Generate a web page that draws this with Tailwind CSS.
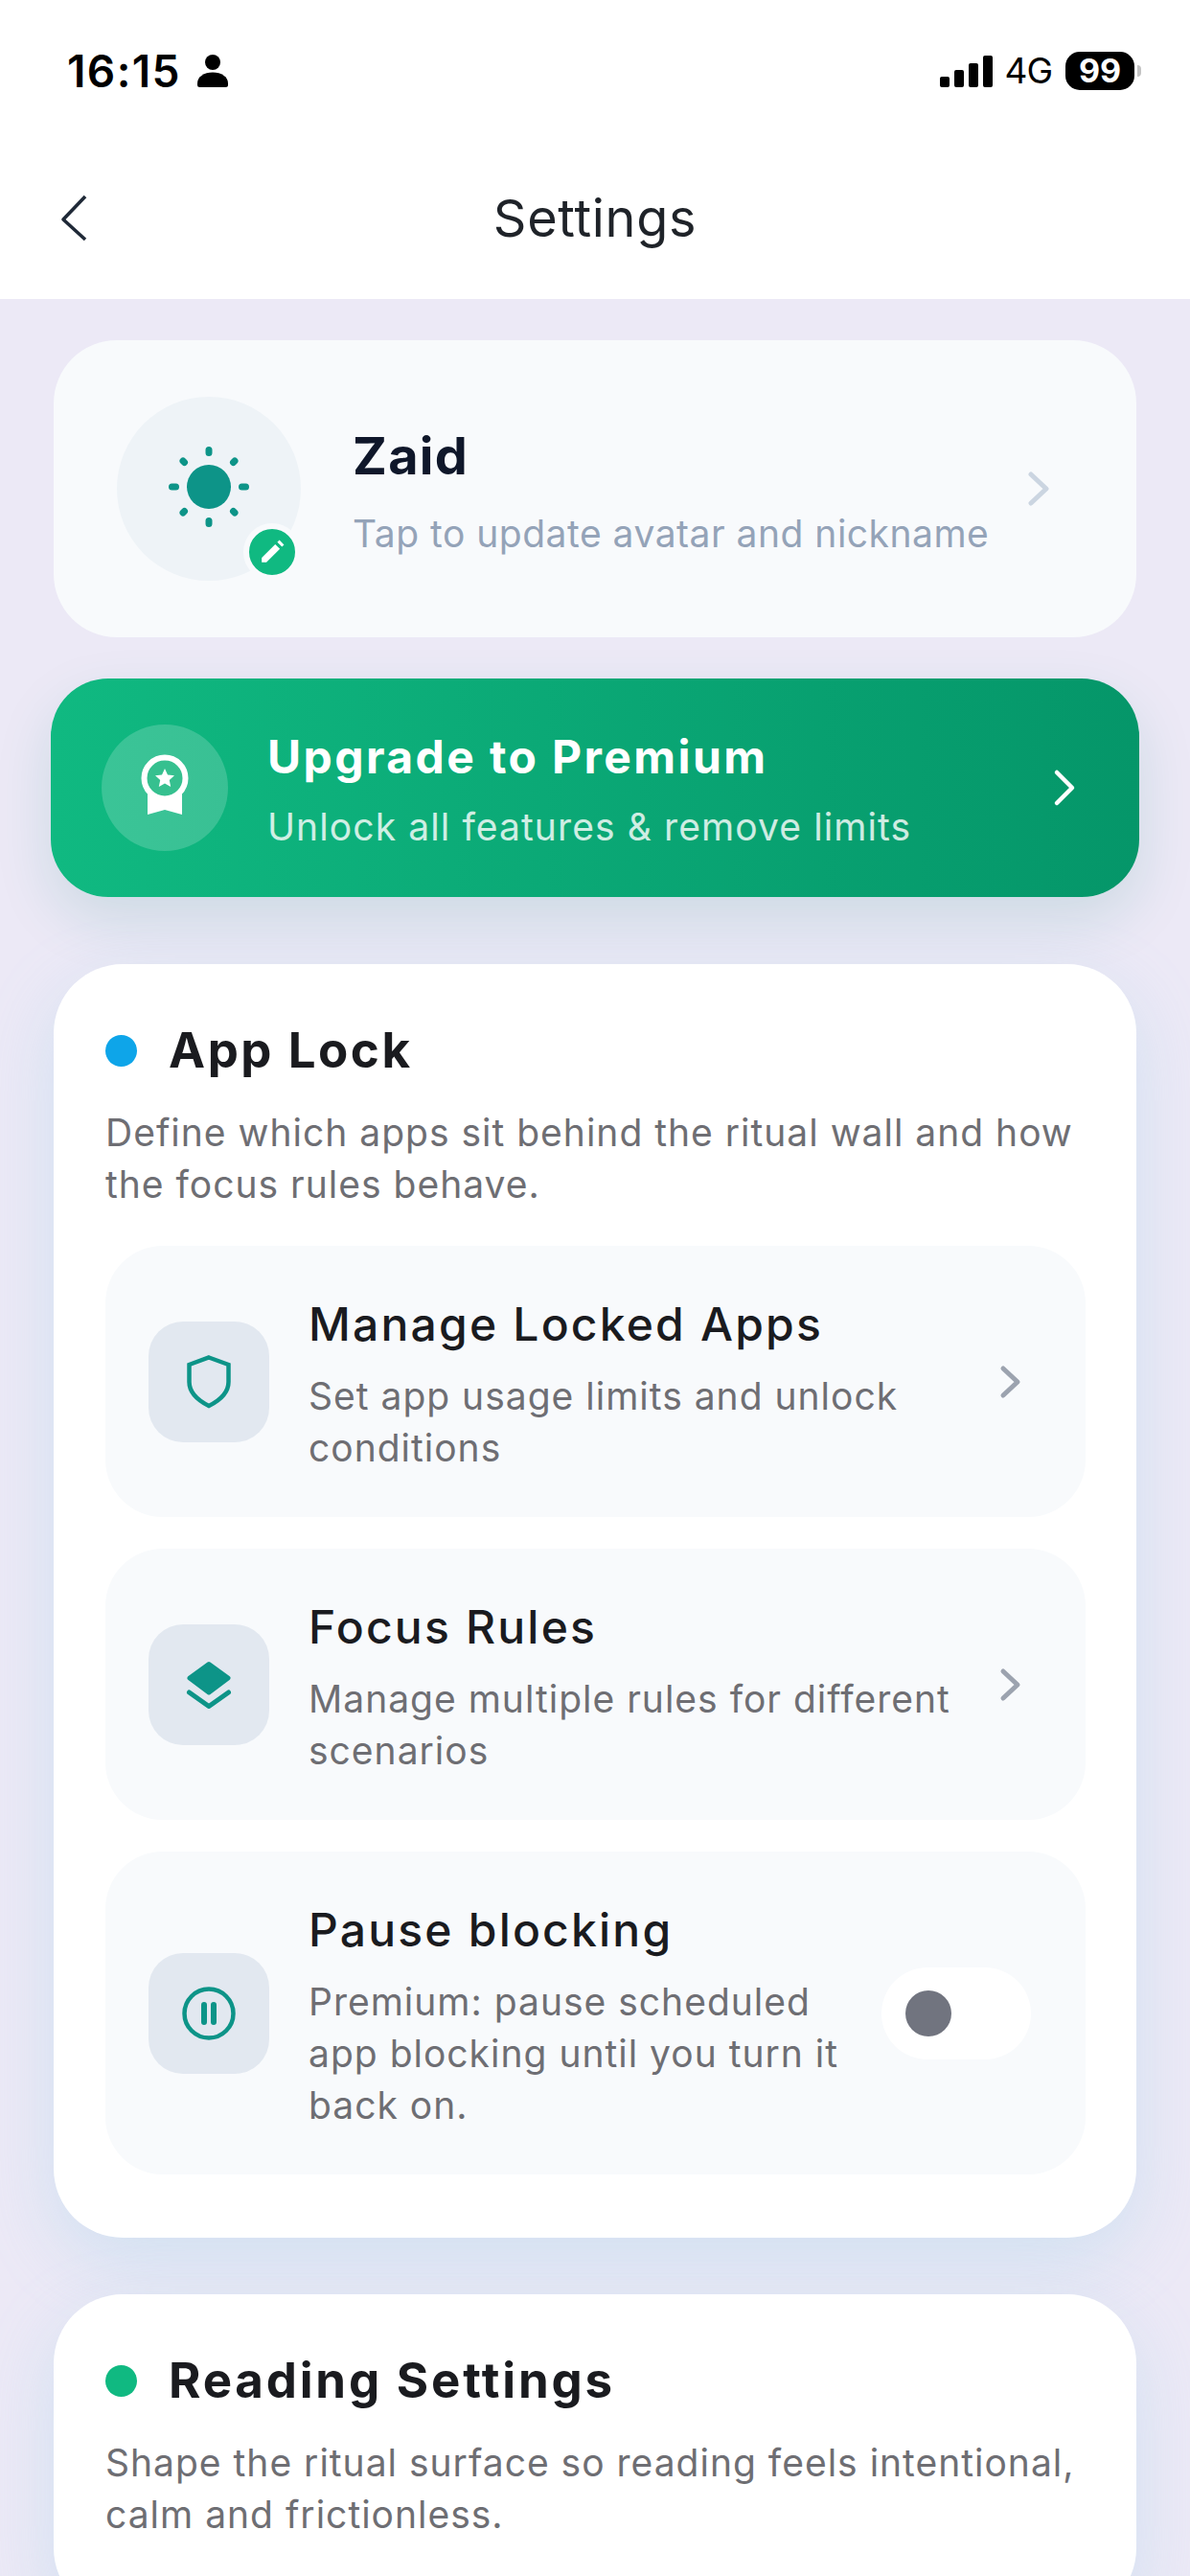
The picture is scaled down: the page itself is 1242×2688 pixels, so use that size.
<!DOCTYPE html>
<html lang="en">
<head>
  <meta charset="UTF-8">
  <meta name="viewport" content="width=device-width, initial-scale=1.0">
  <title>Settings</title>
  <script src="https://cdn.jsdelivr.net/npm/@tailwindcss/browser@4"></script>
</head>
<body class="w-[1242px] h-[2688px] overflow-hidden bg-[#ece9f6] font-['Inter',sans-serif]">
  <!-- status bar + nav -->
  <header class="bg-white h-[312px] relative z-10">
    <div class="h-[150px] flex items-start justify-between pl-[70px] pr-[51px] pt-[50px]">
      <div class="flex items-center gap-[17px] h-[48px]">
        <span class="text-[46px] leading-[48px] font-semibold text-black tracking-[1.4px]">16:15</span>
        <svg class="w-[32px] h-[34px]" viewBox="0 0 32 34" fill="#000"><circle cx="16" cy="8" r="8"/><path d="M0 30C0 23 7 18.500 16 18.500S32 23 32 30v1.500a2.500 2.500 0 0 1-2.500 2.500h-27A2.500 2.500 0 0 1 0 31.500z"/></svg>
      </div>
      <div class="flex items-center h-[48px]">
        <svg class="w-[55px] h-[33px]" viewBox="0 0 55 33" fill="#000"><rect x="0" y="22" width="10" height="11" rx="2"/><rect x="15" y="15" width="10" height="18" rx="2"/><rect x="30" y="8" width="10" height="25" rx="2"/><rect x="45" y="0" width="10" height="33" rx="2"/></svg>
        <span class="ml-[12px] text-[37px] leading-[48px] text-black tracking-[-1px]">4G</span>
        <span class="ml-[14px] w-[72px] h-[40px] rounded-[15px] bg-black text-white text-[34px] leading-[40px] font-bold text-center">99</span>
        <span class="ml-[3px] w-[4px] h-[12px] rounded-r-full bg-[#c4c4c4]"></span>
      </div>
    </div>
    <div class="h-[162px] relative flex items-start justify-center">
      <svg class="absolute left-[63px] top-[52px] w-[28px] h-[50px]" viewBox="0 0 28 50" fill="none" stroke="#1f2937" stroke-width="3.6"><path d="M26 3 3 27l23 21" stroke-linejoin="round"/></svg>
      <h1 class="mt-[48px] text-[54px] leading-[60px] text-[#1f2329] tracking-[0.7px]">Settings</h1>
    </div>
  </header>

  <main class="px-[56px] pt-[43px]">
    <!-- profile -->
    <section class="h-[310px] rounded-[66px] bg-[#f8fafc] flex items-center pl-[66px] pr-[90px]">
      <div class="relative w-[192px] h-[192px] rounded-full bg-[#eef3f7] flex items-center justify-center shrink-0">
        <svg class="w-[90px] h-[90px] -mt-[4px]" viewBox="0 0 90 90" fill="none" stroke="#0d9488" stroke-width="7" stroke-linecap="round">
          <circle cx="45" cy="45" r="23" fill="#0d9488" stroke="none"/>
          <path d="M45 6.500v3M45 80.500v3M6.500 45h4M79.500 45h4M18 18l1.500 1.500M70.500 70.500l1.500 1.500M72 18l-1.500 1.500M18 72l1.500-1.500"/>
        </svg>
        <div class="absolute left-[132px] top-[132px] w-[60px] h-[60px] rounded-full bg-[#10b981] border-[6px] border-[#f8fafc] flex items-center justify-center">
          <svg class="w-[26px] h-[26px]" viewBox="0 0 24 24" fill="#fff"><path d="M2 22v-4.500L15 4.500 19.500 9 6.500 22zM17 2.500l2-2 4.500 4.500-2 2z"/></svg>
        </div>
      </div>
      <div class="ml-[54px] flex-1 pt-[7px]">
        <h2 class="text-[54px] leading-[66px] font-bold text-[#0f172a] tracking-[1.3px]">Zaid</h2>
        <p class="mt-[21px] text-[39px] leading-[54px] text-[#94a3b8] tracking-[0.5px] whitespace-nowrap">Tap to update avatar and nickname</p>
      </div>
      <svg class="w-[24px] h-[38px] shrink-0 -ml-[10px]" viewBox="0 0 24 38" fill="none" stroke="#cbd5e1" stroke-width="5" stroke-linecap="round" stroke-linejoin="round"><path d="M4 4l16 15L4 34"/></svg>
    </section>

    <!-- premium banner -->
    <section class="-mx-[3px] mt-[43px] h-[228px] rounded-[60px] bg-gradient-to-r from-[#10b981] to-[#059669] flex items-center pl-[53px] pr-[64px] shadow-[0_24px_60px_rgba(16,130,120,0.14)]">
      <div class="w-[132px] h-[132px] rounded-full bg-white/[0.18] flex items-center justify-center shrink-0">
        <svg class="w-[50px] h-[64px] -mt-[6px]" viewBox="0 0 50 64">
          <path d="M7 32h36v31l-18-5-18 5z" fill="#fff"/>
          <circle cx="25" cy="25" r="21.500" fill="#36c08f" stroke="#fff" stroke-width="6"/>
          <path d="M25 15l3 6.500 7 .8-5.200 4.800 1.400 7L25 30.500l-6.200 3.600 1.400-7L15 22.300l7-.8z" fill="#fff"/>
        </svg>
      </div>
      <div class="ml-[41px] flex-1 pt-[6px]">
        <h2 class="text-[48px] leading-[60px] font-bold text-white tracking-[2.4px]">Upgrade to Premium</h2>
        <p class="mt-[16px] text-[39px] leading-[54px] text-white/80 tracking-[1.1px]">Unlock all features &amp; remove limits</p>
      </div>
      <svg class="w-[28px] h-[40px] shrink-0" viewBox="0 0 28 40" fill="none" stroke="#fff" stroke-width="4.500" stroke-linecap="round" stroke-linejoin="round"><path d="M6 4l16 16L6 36"/></svg>
    </section>

    <!-- app lock -->
    <section class="mt-[70px] h-[1329px] rounded-[72px] bg-white pl-[54px] pr-[53px] pt-[57px] shadow-[0_24px_72px_rgba(140,205,230,0.28)]">
      <div class="flex items-center gap-[33px]">
        <span class="w-[33px] h-[33px] rounded-full bg-[#0ea5e9]"></span>
        <h2 class="text-[51px] leading-[66px] font-bold text-[#1a1b1f] tracking-[2.55px]">App Lock</h2>
      </div>
      <p class="mt-[26px] text-[39px] leading-[54px] text-[#6e6e73] tracking-[1px]">Define which apps sit behind the ritual wall and how the focus rules behave.</p>
      <div class="mt-[37px] flex flex-col gap-[33px]">
        <div class="h-[283px] rounded-[60px] bg-[#f8fafc] flex items-center pl-[45px] pr-[66px]">
          <div class="w-[126px] h-[126px] rounded-[36px] bg-[#e2e8f0] flex items-center justify-center shrink-0">
            <svg class="w-[46px] h-[56px]" viewBox="0 0 46 56" fill="none" stroke="#0d9488" stroke-width="4.500" stroke-linejoin="miter"><path d="M23 2.500 43.500 10v18c0 12-10.500 20-20.500 25C13 48 2.500 40 2.500 28V10z"/></svg>
          </div>
          <div class="ml-[41px] flex-1 pt-[4px]">
            <h3 class="text-[48px] leading-[66px] font-medium text-[#1a1b1f] tracking-[2.2px]">Manage Locked Apps</h3>
            <p class="mt-[15px] text-[39px] leading-[54px] text-[#6e6e73] tracking-[1px]">Set app usage limits and unlock conditions</p>
          </div>
          <svg class="w-[24px] h-[36px] shrink-0" viewBox="0 0 24 36" fill="none" stroke="#9ca3af" stroke-width="5" stroke-linecap="round" stroke-linejoin="round"><path d="M4 4l15 14L4 32"/></svg>
        </div>
        <div class="h-[283px] rounded-[60px] bg-[#f8fafc] flex items-center pl-[45px] pr-[66px]">
          <div class="w-[126px] h-[126px] rounded-[36px] bg-[#e2e8f0] flex items-center justify-center shrink-0">
            <svg class="w-[48px] h-[50px]" viewBox="0 0 48 50" fill="#0d9488" stroke="#0d9488" stroke-linejoin="round" stroke-linecap="round"><path d="M24 3.500 44 18 24 33 4 18z" stroke-width="5"/><path d="M3.500 33 24 47.500 44.500 33" fill="none" stroke-width="5"/></svg>
          </div>
          <div class="ml-[41px] flex-1 pt-[4px]">
            <h3 class="text-[48px] leading-[66px] font-medium text-[#1a1b1f] tracking-[2.2px]">Focus Rules</h3>
            <p class="mt-[15px] text-[39px] leading-[54px] text-[#6e6e73] tracking-[1px]">Manage multiple rules for different scenarios</p>
          </div>
          <svg class="w-[24px] h-[36px] shrink-0" viewBox="0 0 24 36" fill="none" stroke="#9ca3af" stroke-width="5" stroke-linecap="round" stroke-linejoin="round"><path d="M4 4l15 14L4 32"/></svg>
        </div>
        <div class="h-[337px] rounded-[60px] bg-[#f8fafc] flex items-center pl-[45px] pr-[57px]">
          <div class="w-[126px] h-[126px] rounded-[36px] bg-[#e2e8f0] flex items-center justify-center shrink-0">
            <svg class="w-[56px] h-[56px]" viewBox="0 0 56 56" fill="none" stroke="#0d9488"><circle cx="28" cy="28" r="25.500" stroke-width="4.500"/><path d="M23 19v18M33 19v18" stroke-width="6" stroke-linecap="round"/></svg>
          </div>
          <div class="ml-[41px] flex-1 pt-[3px]">
            <h3 class="text-[48px] leading-[66px] font-medium text-[#1a1b1f] tracking-[2.2px]">Pause blocking</h3>
            <p class="mt-[15px] text-[39px] leading-[54px] text-[#6e6e73] tracking-[1px] w-[570px]">Premium: pause scheduled app blocking until you turn it back on.</p>
          </div>
          <div class="w-[156px] h-[96px] rounded-full bg-white flex items-center pl-[25px] shrink-0">
            <span class="w-[48px] h-[48px] rounded-full bg-[#71747f]"></span>
          </div>
        </div>
      </div>
    </section>

    <!-- reading settings -->
    <section class="mt-[59px] rounded-[72px] bg-white pl-[54px] pr-[53px] pt-[57px] pb-[80px] shadow-[0_24px_72px_rgba(140,205,230,0.28)]">
      <div class="flex items-center gap-[33px]">
        <span class="w-[33px] h-[33px] rounded-full bg-[#10b981]"></span>
        <h2 class="text-[51px] leading-[66px] font-bold text-[#1a1b1f] tracking-[2.8px]">Reading Settings</h2>
      </div>
      <p class="mt-[26px] text-[39px] leading-[54px] text-[#6e6e73] tracking-[1px]">Shape the ritual surface so reading feels intentional, calm and frictionless.</p>
    </section>
  </main>
</body>
</html>
